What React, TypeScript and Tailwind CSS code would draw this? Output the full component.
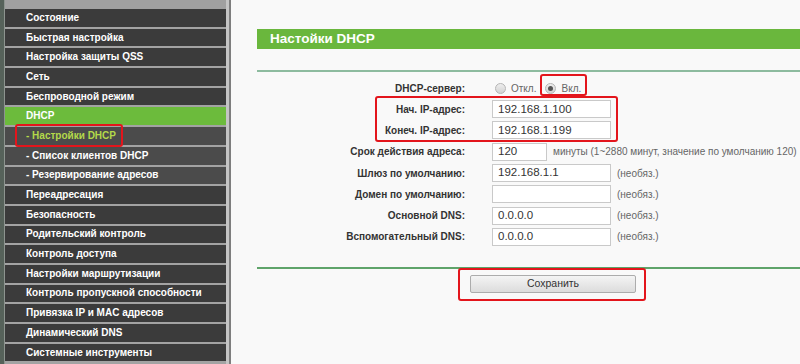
import React from 'react';

type Item = { label: string; kind?: 'active' | 'sub' | 'subActive' };

const MENU: Item[] = [
  { label: 'Состояние' },
  { label: 'Быстрая настройка' },
  { label: 'Настройка защиты QSS' },
  { label: 'Сеть' },
  { label: 'Беспроводной режим' },
  { label: 'DHCP', kind: 'active' },
  { label: '- Настройки DHCP', kind: 'subActive' },
  { label: '- Список клиентов DHCP', kind: 'sub' },
  { label: '- Резервирование адресов', kind: 'sub' },
  { label: 'Переадресация' },
  { label: 'Безопасность' },
  { label: 'Родительский контроль' },
  { label: 'Контроль доступа' },
  { label: 'Настройки маршрутизации' },
  { label: 'Контроль пропускной способности' },
  { label: 'Привязка IP и MAC адресов' },
  { label: 'Динамический DNS' },
  { label: 'Системные инструменты' },
];

const itemClass: Record<string, string> = {
  normal: 'bg-[#3b3b3b] text-white',
  active: 'bg-[#6cbb3c] text-white',
  sub: 'bg-[#4b4b4b] text-white',
  subActive: 'bg-[#4b4b4b] text-[#b4d94a]',
};

const FIELDS: { label: string; value: string; short?: boolean; note: string }[] = [
  { label: 'Нач. IP-адрес:', value: '192.168.1.100', note: '' },
  { label: 'Конеч. IP-адрес:', value: '192.168.1.199', note: '' },
  { label: 'Срок действия адреса:', value: '120', short: true, note: 'минуты (1~2880 минут, значение по умолчанию 120)' },
  { label: 'Шлюз по умолчанию:', value: '192.168.1.1', note: '(необяз.)' },
  { label: 'Домен по умолчанию:', value: '', note: '(необяз.)' },
  { label: 'Основной DNS:', value: '0.0.0.0', note: '(необяз.)' },
  { label: 'Вспомогательный DNS:', value: '0.0.0.0', note: '(необяз.)' },
];

const Radio: React.FC<{ checked?: boolean; className?: string }> = ({ checked, className = '' }) => (
  <span className={`w-[11px] h-[11px] rounded-full border border-[#b5b5b5] bg-gradient-to-b from-[#eeeeee] to-[#d2d2d2] flex items-center justify-center ${className}`}>
    {checked && <span className="w-[5px] h-[5px] rounded-full bg-[#555]" />}
  </span>
);

const App: React.FC = () => {
  return (
    <div className="relative flex w-[800px] h-[364px] overflow-hidden font-['Liberation_Sans',Arial,sans-serif]">
      {/* Sidebar */}
      <aside className="flex shrink-0 w-[231px] h-full">
        <div className="w-[4px] bg-[#56625a]" />
        <div className="w-[1px] bg-[#8d948f]" />
        <div className="flex flex-col w-[221px] bg-[#a3a3a3]">
          <div className="h-[9px] shrink-0 bg-[#a0a0a0]" />
          <div className="flex flex-col gap-[2px]">
            {MENU.map(item => (
              <div
                key={item.label}
                className={`h-[17.7px] shrink-0 flex items-center pl-[21px] text-[10px] font-bold leading-none ${itemClass[item.kind ?? 'normal']}`}
              >
                {item.label}
              </div>
            ))}
          </div>
        </div>
        <div className="w-[3px] bg-[#c4c4c4]" />
        <div className="w-[2px] bg-[#7e7e7e]" />
      </aside>

      {/* Content */}
      <main className="relative flex-1 bg-[#f9f9f9] pl-[26px] pt-[29px]">
        <div className="h-[20px] bg-[#6ab73d] flex items-center pl-[13px] text-white text-[13.5px] font-bold">
          Настойки DHCP
        </div>
        <div className="mt-[21px] h-[2px] bg-[#8dbb9f]" />

        <div className="mt-[7px] flex flex-col gap-[3px] text-[10px] text-[#333]">
          <div className="flex items-center h-[18px]">
            <span className="w-[208px] text-right font-bold">DHCP-сервер:</span>
            <div className="ml-[30px] flex items-center gap-[5px] text-[#666]">
              <Radio />
              <span>Откл.</span>
              <Radio checked className="ml-[4px]" />
              <span>Вкл.</span>
            </div>
          </div>
          {FIELDS.map(f => (
            <div key={f.label} className="flex items-center h-[18.3px] whitespace-nowrap">
              <span className="w-[208px] text-right font-bold">{f.label}</span>
              <div
                className={`ml-[27px] h-[18px] border border-[#c9c9c9] bg-white flex items-center px-[5px] text-[11.5px] text-[#333] ${f.short ? 'w-[55px]' : 'w-[119px]'}`}
              >
                {f.value}
              </div>
              {f.note && <span className="ml-[6px] text-[10px] text-[#666]">{f.note}</span>}
            </div>
          ))}
        </div>

        <div className="mt-[21px] h-[1.5px] bg-[#5fa46a]" />
        <div className="mt-[6px] pl-[213px]">
          <button className="block w-[166px] h-[18px] border border-[#acacac] rounded-[2px] bg-gradient-to-b from-[#f4f4f4] to-[#dcdcdc] text-[10.5px] text-[#333] leading-none">
            Сохранить
          </button>
        </div>

        {/* red annotation boxes */}
        <div className="absolute left-[309px] top-[74px] w-[47px] h-[22px] border-2 border-[#e3151c] rounded-[3px]" />
        <div className="absolute left-[144px] top-[96px] w-[243px] h-[46px] border-2 border-[#e3151c] rounded-[3px]" />
        <div className="absolute left-[227px] top-[268px] w-[188px] h-[33px] border-2 border-[#e3151c] rounded-[3px]" />
      </main>

      <div className="absolute left-[15px] top-[124px] w-[108px] h-[23px] border-2 border-[#e3151c] rounded-[3px]" />
    </div>
  );
};

export default App;
